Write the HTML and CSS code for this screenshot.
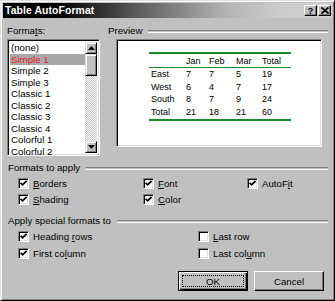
FILE: index.html
```html
<!DOCTYPE html>
<html>
<head>
<meta charset="utf-8">
<link rel="stylesheet" href="styles.css">
</head>
<body>
<div class="win">
  <div class="titlebar">
    <span class="title">Table AutoFormat</span>
    <div class="tbtns">
      <span class="tbtn q">?</span>
      <span class="tbtn x">
        <svg width="8" height="7" viewBox="0 0 8 7"><path d="M0.5 0.5 L7.5 6.5 M7.5 0.5 L0.5 6.5" stroke="#000" stroke-width="1.8"/></svg>
      </span>
    </div>
  </div>

  <div class="top">
    <div class="col-left">
      <div class="label">Forma<u>t</u>s:</div>
      <div class="listbox">
        <div class="items">
          <div class="item">(none)</div>
          <div class="item sel">Simple 1</div>
          <div class="item">Simple 2</div>
          <div class="item">Simple 3</div>
          <div class="item">Classic 1</div>
          <div class="item">Classic 2</div>
          <div class="item">Classic 3</div>
          <div class="item">Classic 4</div>
          <div class="item">Colorful 1</div>
          <div class="item">Colorful 2</div>
        </div>
        <div class="scroll">
          <div class="sbtn"><svg width="7" height="4" viewBox="0 0 7 4"><path d="M3.5 0 L7 4 L0 4 Z" fill="#000"/></svg></div>
          <div class="thumb"></div>
          <div class="track"></div>
          <div class="sbtn"><svg width="7" height="4" viewBox="0 0 7 4"><path d="M0 0 L7 0 L3.5 4 Z" fill="#000"/></svg></div>
        </div>
      </div>
    </div>
    <div class="col-right">
      <div class="group-head"><span>Preview</span><i class="line"></i></div>
      <div class="preview">
        <div class="ptable">
          <div class="prow head"><span></span><span>Jan</span><span>Feb</span><span>Mar</span><span>Total</span></div>
          <div class="prow"><span>East</span><span>7</span><span>7</span><span>5</span><span>19</span></div>
          <div class="prow"><span>West</span><span>6</span><span>4</span><span>7</span><span>17</span></div>
          <div class="prow"><span>South</span><span>8</span><span>7</span><span>9</span><span>24</span></div>
          <div class="prow"><span>Total</span><span>21</span><span>18</span><span>21</span><span>60</span></div>
        </div>
      </div>
    </div>
  </div>

  <div class="group-head wide s2"><span>Formats to apply</span><i class="line"></i></div>
  <div class="checks three">
    <label class="chk"><i class="box on"></i><span><u>B</u>orders</span></label>
    <label class="chk"><i class="box on"></i><span><u>F</u>ont</span></label>
    <label class="chk"><i class="box on"></i><span>AutoF<u>i</u>t</span></label>
    <label class="chk"><i class="box on"></i><span><u>S</u>hading</span></label>
    <label class="chk"><i class="box on"></i><span><u>C</u>olor</span></label>
  </div>

  <div class="group-head wide s3"><span>Apply special formats to</span><i class="line"></i></div>
  <div class="checks two">
    <label class="chk"><i class="box on"></i><span>Heading <u>r</u>ows</span></label>
    <label class="chk"><i class="box"></i><span><u>L</u>ast row</span></label>
    <label class="chk"><i class="box on"></i><span>First co<u>l</u>umn</span></label>
    <label class="chk"><i class="box"></i><span>Last col<u>u</u>mn</span></label>
  </div>

  <div class="buttons">
    <div class="btn default"><span class="focus">OK</span></div>
    <div class="btn">Cancel</div>
  </div>
</div>
</body>
</html>
```

FILE: styles.css
```css
html, body {
  margin: 0;
  padding: 0;
  background: #c0c0c0;
}
body {
  font-family: "Liberation Sans", Arial, sans-serif;
  font-size: 9.7px;
  color: #000;
}
u { text-decoration: underline; text-underline-offset: 1px; }

.win {
  width: 335px;
  height: 301px;
  box-sizing: border-box;
  background: #c0c0c0;
  border-top: 1px solid #dfdfdf;
  border-left: 1px solid #dfdfdf;
  border-right: 1px solid #000;
  border-bottom: 1px solid #000;
  box-shadow: inset 1px 1px 0 #fff, inset -1px -1px 0 #808080;
  padding: 2px;
  display: flex;
  flex-direction: column;
}

.titlebar {
  height: 15px;
  display: flex;
  align-items: center;
  justify-content: space-between;
  background: linear-gradient(90deg, #000 0%, #050505 18%, #6a6a6a 45%, #b4b4b4 68%, #cdcdcd 85%, #d2d2d2 100%);
  padding: 0 1px 0 2px;
}
.title {
  color: #fff;
  font-weight: bold;
  font-size: 10.4px;
  letter-spacing: 0.1px;
}
.tbtns { display: flex; gap: 1px; }
.tbtn {
  width: 13px;
  height: 11px;
  box-sizing: border-box;
  background: #c0c0c0;
  border-top: 1px solid #fff;
  border-left: 1px solid #fff;
  border-right: 1px solid #000;
  border-bottom: 1px solid #000;
  box-shadow: inset -1px -1px 0 #808080;
  display: flex;
  align-items: center;
  justify-content: center;
  font-weight: bold;
  font-size: 9.5px;
  line-height: 9px;
}
.tbtn.q { padding-bottom: 1px; }

.top {
  display: grid;
  grid-template-columns: 93px 220px;
  column-gap: 8px;
  padding-left: 4px;
  margin-top: 7px;
}
.label, .group-head {
  height: 14px;
  line-height: 11px;
}
.group-head {
  display: flex;
  align-items: flex-start;
}
.group-head span { flex: none; }
.group-head .line {
  flex: 1;
  margin-left: 6px;
  margin-top: 5px;
  height: 1px;
  border-top: 1px solid #808080;
  border-bottom: 1px solid #fff;
}

.listbox {
  height: 117px;
  box-sizing: border-box;
  background: #fff;
  border-top: 1px solid #808080;
  border-left: 1px solid #808080;
  border-right: 1px solid #fff;
  border-bottom: 1px solid #fff;
  box-shadow: inset 1px 1px 0 #000, inset -1px -1px 0 #dfdfdf;
  padding: 2px 2px 2px 2px;
  display: flex;
  overflow: hidden;
}
.items {
  flex: 1;
  padding-top: 0;
}
.item {
  height: 11.5px;
  line-height: 11.5px;
  padding-left: 1px;
  white-space: nowrap;
}
.item.sel {
  background: #a8a8a8;
  color: #e8202c;
}
.scroll {
  width: 12px;
  display: flex;
  flex-direction: column;
  background: #e6e6e6;
}
.sbtn, .thumb {
  box-sizing: border-box;
  background: #c0c0c0;
  border-top: 1px solid #dfdfdf;
  border-left: 1px solid #dfdfdf;
  border-right: 1px solid #000;
  border-bottom: 1px solid #000;
  box-shadow: inset 1px 1px 0 #fff, inset -1px -1px 0 #808080;
}
.sbtn {
  height: 12px;
  display: flex;
  align-items: center;
  justify-content: center;
}
.thumb { height: 22px; }
.track {
  flex: 1;
  background: repeating-conic-gradient(#fff 0 25%, #c0c0c0 0 50%) 0 0 / 2px 2px;
  opacity: 0.8;
}

.preview {
  margin-left: 8px;
  width: 206px;
  height: 108px;
  box-sizing: border-box;
  background: #fff;
  border-top: 1px solid #808080;
  border-left: 1px solid #808080;
  border-right: 1px solid #fff;
  border-bottom: 1px solid #fff;
  box-shadow: inset 1px 1px 0 #000, inset -1px -1px 0 #dfdfdf;
  padding: 12px 0 0 32px;
}
.ptable {
  width: 142px;
  border-top: 2px solid #1b8a2a;
  border-bottom: 2px solid #1b8a2a;
  font-size: 9px;
  padding-bottom: 1px;
}
.prow {
  display: grid;
  grid-template-columns: 35px 23px 27px 26px 1fr;
  padding-left: 2px;
  height: 12.5px;
  line-height: 12.5px;
}
.prow.head {
  height: 13px;
  line-height: 14px;
  border-bottom: 1px solid #1b8a2a;
  margin-bottom: 0;
}

.wide { padding-left: 5px; padding-right: 4px; }
.s2 { margin-top: 6px; height: 13px; }
.s3 { margin-top: 8px; height: 13px; }

.checks {
  display: grid;
  padding-left: 15px;
}
.checks.three {
  grid-template-columns: 125px 104px auto;
  grid-auto-rows: 16px;
}
.checks.two {
  grid-template-columns: 180px auto;
  grid-auto-rows: 17px;
}
.chk {
  display: flex;
  align-items: center;
  gap: 4px;
}
.box {
  width: 11px;
  height: 11px;
  box-sizing: border-box;
  background: #fff;
  border-top: 1px solid #808080;
  border-left: 1px solid #808080;
  border-right: 1px solid #fff;
  border-bottom: 1px solid #fff;
  box-shadow: inset 1px 1px 0 #000, inset -1px -1px 0 #dfdfdf;
  flex: none;
}
.box.on {
  background: #fff url("data:image/svg+xml;utf8,<svg xmlns='http://www.w3.org/2000/svg' width='9' height='9' viewBox='0 0 9 9'><path d='M1.6 3.8 L3.6 5.8 L7.6 1.8' fill='none' stroke='black' stroke-width='1.8'/></svg>") center / 9px 9px no-repeat;
}

.buttons {
  display: flex;
  justify-content: flex-end;
  gap: 6px;
  padding-right: 8px;
  margin-top: 9px;
}
.btn {
  width: 70px;
  height: 20px;
  box-sizing: border-box;
  background: #c0c0c0;
  border-top: 1px solid #fff;
  border-left: 1px solid #fff;
  border-right: 1px solid #000;
  border-bottom: 1px solid #000;
  box-shadow: inset -1px -1px 0 #808080;
  display: flex;
  align-items: center;
  justify-content: center;
}
.btn.default {
  border: 1px solid #000;
  box-shadow: inset 1px 1px 0 #fff, inset -1px -1px 0 #000, inset -2px -2px 0 #808080;
  padding: 3px;
}
.focus {
  flex: 1;
  align-self: stretch;
  display: flex;
  align-items: center;
  justify-content: center;
  outline: 1px dotted #000;
  outline-offset: -1px;
}
```
